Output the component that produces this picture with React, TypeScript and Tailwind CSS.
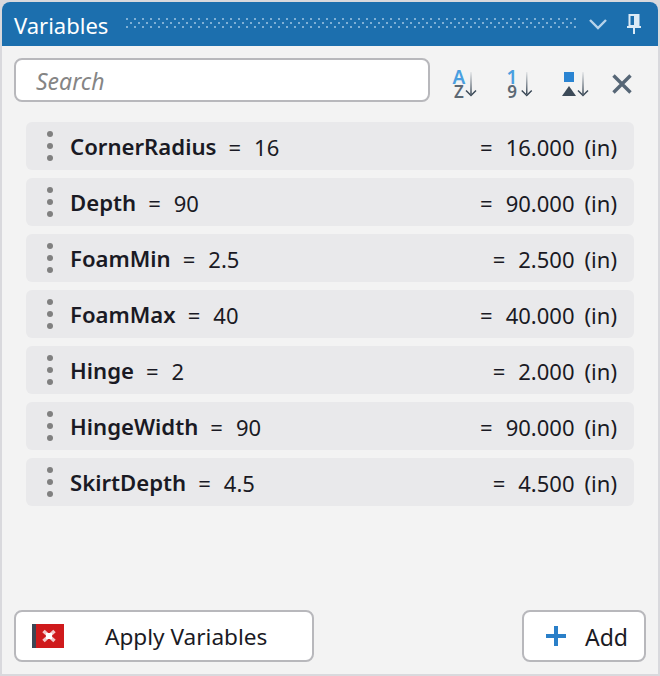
import React from "react";

const rows = [
  ["CornerRadius", "16", "16.000"],
  ["Depth", "90", "90.000"],
  ["FoamMin", "2.5", "2.500"],
  ["FoamMax", "40", "40.000"],
  ["Hinge", "2", "2.000"],
  ["HingeWidth", "90", "90.000"],
  ["SkirtDepth", "4.5", "4.500"],
];

function Grip() {
  return (
    <div className="flex flex-col gap-[6px] w-[6px]">
      <div className="w-[6px] h-[6px] rounded-full bg-[#808080]" />
      <div className="w-[6px] h-[6px] rounded-full bg-[#808080]" />
      <div className="w-[6px] h-[6px] rounded-full bg-[#808080]" />
    </div>
  );
}

function SortArrow({ id, x }: { id: string; x: number }) {
  return (
    <>
      <defs>
        <linearGradient id={id} x1="0" y1="0" x2="0" y2="1">
          <stop offset="0" stopColor="#e4e6e8" />
          <stop offset="1" stopColor="#3c4a58" />
        </linearGradient>
      </defs>
      <rect x={x - 0.75} y="2" width="1.5" height="22" fill={`url(#${id})`} />
      <path d={`M${x - 5} 20.5 L${x} 25.5 L${x + 5} 20.5`} fill="none" stroke="#3c4a58" strokeWidth="1.5" />
    </>
  );
}

function LetterTool({ id, top, bottom, width, arrowX, cls }: { id: string; top: string; bottom: string; width: number; arrowX: number; cls: string }) {
  return (
    <svg width={width} height="28" viewBox={`0 0 ${width} 28`} className={`block shrink-0 overflow-visible ${cls}`}>
      <text x="7" y="13.5" textAnchor="middle" fontFamily="Noto Sans" fontWeight="600" fontSize="19" fill="#4a9fe0">{top}</text>
      <text x="7" y="28" textAnchor="middle" fontFamily="Noto Sans" fontWeight="600" fontSize="17" fill="#5c6873">{bottom}</text>
      <SortArrow id={id} x={arrowX} />
    </svg>
  );
}

export default function App() {
  return (
    <div className="w-[660px] h-[676px] bg-[#d9d9dd] pl-[2px] pt-[2px] pb-[2px] font-['Noto_Sans','Open_Sans',sans-serif] text-[#1a1a24] overflow-hidden">
      <div className="w-[656px] h-[672px] bg-[#f3f3f3] flex flex-col rounded-t-[8px] overflow-hidden">
        <div className="h-[44px] bg-[#1c6fae] flex items-center pl-[12px] shrink-0">
          <span className="text-[22px] text-white w-[112px] leading-[30px] pt-[2px]">Variables</span>
          <svg width="450" height="12" className="block shrink-0">
            <defs>
              <pattern id="dots" width="8" height="8" patternUnits="userSpaceOnUse">
                <rect x="0" y="0" width="2" height="2" fill="#7fb0d6" />
                <rect x="4" y="4" width="2" height="2" fill="#7fb0d6" />
              </pattern>
            </defs>
            <rect width="450" height="10" fill="url(#dots)" />
          </svg>
          <svg width="18" height="12" viewBox="0 0 18 12" className="ml-[13px] block">
            <path d="M1 2 L9 10 L17 2" fill="none" stroke="#b7d3ea" strokeWidth="2.4" />
          </svg>
          <svg width="16" height="24" viewBox="0 0 16 24" className="ml-[19px] block">
            <path d="M3.5 3 H12.5 V14 H3.5 Z M8 14 V22 M1 15 H15" fill="none" stroke="#dcebf6" strokeWidth="2" />
            <rect x="8" y="4" width="4" height="9" fill="#dcebf6" />
          </svg>
        </div>

        <div className="flex items-start pl-[12px] pt-[12px] shrink-0">
          <div className="w-[416px] h-[44px] bg-white border-2 border-[#b8b8bc] rounded-[8px] flex items-center pl-[20px]">
            <span className="italic text-[23px] text-[#858585] pt-[2px]">Search</span>
          </div>
          <div className="flex items-start pt-[12px]">
            <LetterTool id="ar1" top="A" bottom="Z" width={26} arrowX={19} cls="ml-[22px]" />
            <LetterTool id="ar2" top="1" bottom="9" width={28} arrowX={21.75} cls="ml-[27px]" />
            <svg width="27" height="28" viewBox="0 0 27 28" className="block shrink-0 ml-[29px]">
              <rect x="2" y="2" width="10" height="10" fill="#2a84d2" />
              <path d="M7 16 L14 26 H0 Z" fill="#3c4a58" />
              <SortArrow id="ar3" x={21} />
            </svg>
            <svg width="20" height="20" viewBox="0 0 20 20" className="block shrink-0 ml-[23px] mt-[4px]">
              <path d="M1.5 1.5 L18.5 18.5 M18.5 1.5 L1.5 18.5" stroke="#566676" strokeWidth="3.4" />
            </svg>
          </div>
        </div>

        <div className="flex flex-col gap-[8px] pl-[24px] pt-[20px] pr-[24px] shrink-0">
          {rows.map(([name, expr, value]) => (
            <div key={name} className="w-[608px] h-[48px] bg-[#e9e9eb] rounded-[6px] flex items-center pl-[21px] pr-[17px] text-[22px]">
              <Grip />
              <span className="font-semibold text-[22.15px] ml-[17px] pt-[2px]">{name}</span>
              <span className="ml-[12px] pt-[2px]">=</span>
              <span className="ml-[13px] pt-[2px]">{expr}</span>
              <span className="ml-auto pt-[2px]">=</span>
              <span className="ml-[13px] pt-[2px]">{value}</span>
              <span className="ml-[10px] pt-[2px]">(in)</span>
            </div>
          ))}
        </div>

        <div className="mt-auto flex items-center justify-between pl-[12px] pr-[12px] pb-[12px] shrink-0">
          <div className="w-[300px] h-[52px] bg-white border-2 border-[#b8b8bc] rounded-[8px] flex items-center pl-[16px]">
            <svg width="32" height="24" viewBox="0 0 32 24" className="block shrink-0">
              <rect width="32" height="24" fill="#cf1a1c" />
              <rect width="4" height="24" fill="#3c4654" />
              <path d="M11.5 7 L22.5 17 M22.5 7 L11.5 17" stroke="#f3c9c9" strokeWidth="3.6" />
              <rect x="14" y="9" width="6" height="6" fill="#ffffff" />
            </svg>
            <span className="ml-[41px] text-[22.6px] pt-[2px]">Apply Variables</span>
          </div>
          <div className="w-[124px] h-[52px] bg-white border-2 border-[#b8b8bc] rounded-[8px] flex items-center pl-[22px]">
            <svg width="20" height="20" viewBox="0 0 20 20" className="block shrink-0">
              <path d="M10 0 V20 M0 10 H20" stroke="#2a7fc8" strokeWidth="4" />
            </svg>
            <span className="ml-[19px] text-[23px] pt-[2px]">Add</span>
          </div>
        </div>
      </div>
    </div>
  );
}
